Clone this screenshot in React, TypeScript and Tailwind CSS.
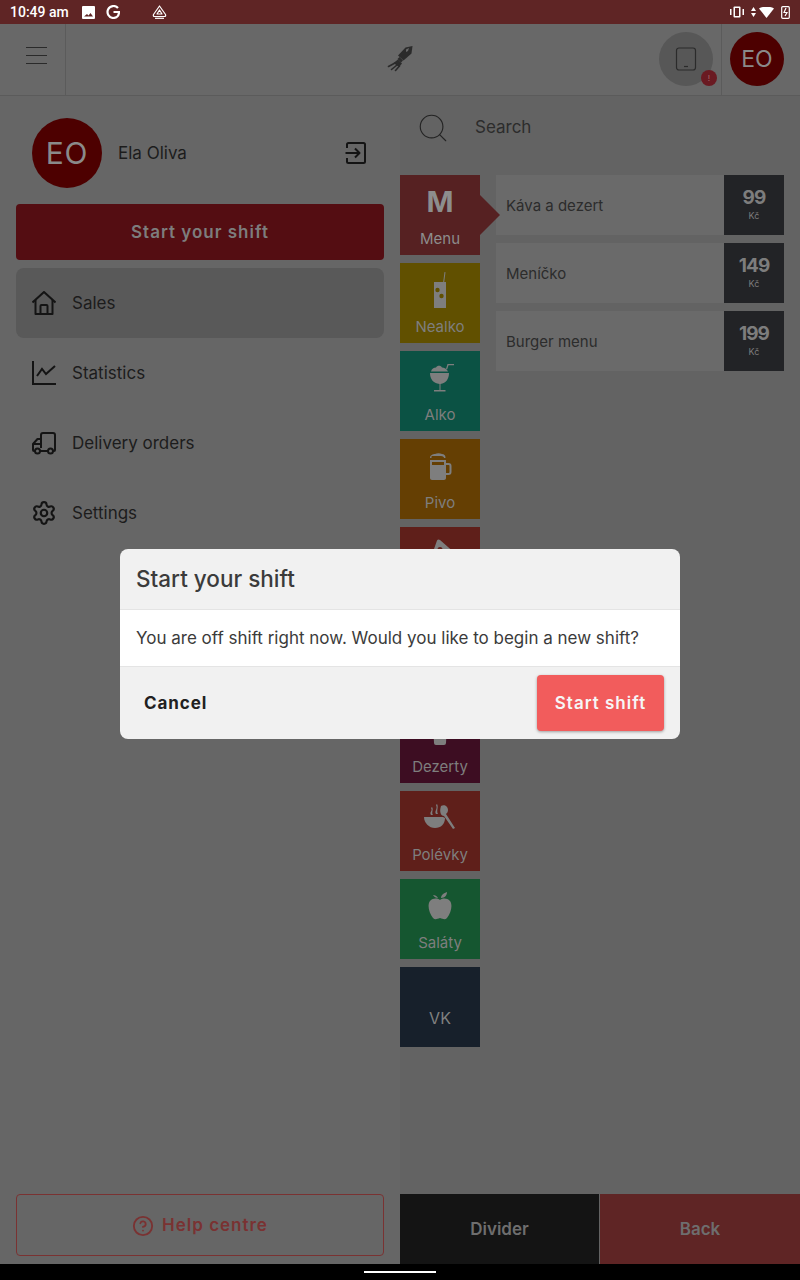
import React from 'react';
import { Settings, CircleHelp, Search } from 'lucide-react';

const font = { fontFamily: 'Inter, "Noto Sans", sans-serif' };

function HomeIcon() {
  return (
    <svg width="24" height="24" viewBox="0 0 24 24" fill="none" stroke="#141414" strokeWidth="2" strokeLinejoin="round">
      <path d="M0.500 11.500L12 1l11.500 10.500" />
      <path d="M3.500 9v14h17V9" />
      <path d="M8.500 23v-8a1 1 0 011-1h5a1 1 0 011 1v8" />
    </svg>
  );
}

function ChartIcon() {
  return (
    <svg width="24" height="24" viewBox="0 0 24 24" fill="none" stroke="#141414" strokeWidth="2">
      <path d="M1 0v23h23" />
      <path d="M5 15l5-7 4 5 9-8" />
    </svg>
  );
}

function TruckIcon() {
  return (
    <svg width="24" height="24" viewBox="0 0 24 24" fill="none" stroke="#141414" strokeWidth="2" strokeLinejoin="round">
      <path d="M9 17V4a2 2 0 012-2h10a2 2 0 012 2v15a1 1 0 01-1 1h-1" />
      <path d="M9 8H5.500L1 13v6a1 1 0 001 1h1" />
      <path d="M1 13h8" />
      <path d="M8 20h8" />
      <circle cx="5.500" cy="20" r="2.500" />
      <circle cx="18.500" cy="20" r="2.500" />
    </svg>
  );
}

function ExitIcon() {
  return (
    <svg width="24" height="24" viewBox="0 0 24 24" fill="none" stroke="#141414" strokeWidth="2" strokeLinejoin="round">
      <path d="M3 7V3.500A1.500 1.500 0 014.500 2h15A1.500 1.500 0 0121 3.500v17a1.500 1.500 0 01-1.500 1.500h-15A1.500 1.500 0 013 20.500V17" />
      <path d="M1.500 12H15" />
      <path d="M11 7.500l4.500 4.500-4.500 4.500" />
    </svg>
  );
}

function RocketIcon() {
  return (
    <svg width="50" height="50" viewBox="0 0 50 50" fill="#2b2b2b">
      <path d="M37.500 12l-1 7.500-8 7-5.500-5 7.500-8z" />
      <path d="M31 15.500l3-1.500-1 3-2 1z" fill="#686868" />
      <path d="M24.500 23l3.500 3.500-2 2-3.500-3.500z" />
      <path d="M23 25.500l4 4-3 3.500-5.500-4z" />
      <g stroke="#2b2b2b" strokeWidth="1.600" strokeLinecap="round">
        <path d="M20 29l-6.500 3.500" />
        <path d="M22 31l-5.500 4.500" />
        <path d="M24.500 32l-4 4.500" />
      </g>
    </svg>
  );
}

function DrinkIcon() {
  return (
    <svg width="14" height="36" viewBox="0 0 14 36" fill="currentColor">
      <path d="M11.500 0l1 .2L11.200 10H13v26H1V10h9.200z" />
      <circle cx="4.500" cy="18" r="2.200" fill="#615000" />
      <circle cx="8.500" cy="24" r="2.200" fill="#615000" />
    </svg>
  );
}

function CocktailIcon() {
  return (
    <svg width="28" height="30" viewBox="-3 0 28 30" fill="currentColor">
      <path d="M1 10h19c0 6-3 10-8.500 11v6h5v1.500H5V27h5.500v-6C4 20 1 16 1 10z" />
      <path d="M2 8.500c.5-2.500 3-4 5-4 1-2.500 5-2.500 6 0 2 0 5 1.500 6 4z" />
      <path d="M17 6l1.500-5H25v1.200h-5.500L18.200 6.300z" />
    </svg>
  );
}

function BeerIcon() {
  return (
    <svg width="23" height="27" viewBox="0 0 23 27" fill="currentColor">
      <path d="M1 5c0-3 3-4 5-4 2-1 5-1 7 0 2 0 3.500 1 3.500 4H15c0-1-1-2-3-2H3c-.7 0-.5 1-.5 2z" />
      <path fillRule="evenodd" d="M1 7h16v3h2.500c2 0 3 1 3 3v6c0 2-1 3-3 3H17v3c0 1-1 2-2 2H3c-1 0-2-1-2-2zm2 2v3h12V9zm14 3v8h2.500c.6 0 1-.4 1-1v-6c0-.6-.4-1-1-1z" />
    </svg>
  );
}

function SoupIcon() {
  return (
    <svg width="32" height="32" viewBox="0 0 32 32" fill="currentColor">
      <path d="M0 15h19l2 1c0 6-4 10-10 10S0 21 0 15z" />
      <path d="M17 4c3-2 7 0 7 4 0 2-1 3-2 4l9 14-2 1-9-13c-3 0-5-4-3-10z" />
      <path d="M7 13c-2-3 2-4 0-7l1-1c2 3-1 5 1 8zM12 12c-2-3 2-5 0-9l1-1c2 3-1 7 1 10z" />
    </svg>
  );
}

function AppleIcon() {
  return (
    <svg width="24" height="28" viewBox="0 0 24 28" fill="currentColor">
      <path d="M12 8c3-2 7-2 10 1 3 4 1 12-3 17-2 2-4 1-7 0-3 1-5 2-7 0C1 21-1 13 2 9c3-3 7-3 10-1z" />
      <path d="M13 6c0-3 3-5 6-6 0 3-2 6-6 6zM10 6C9 4 7 3 5 3c1 2 3 3 5 3z" />
    </svg>
  );
}

function PizzaIcon() {
  return (
    <svg width="34" height="30" viewBox="0 0 34 30" fill="currentColor">
      <path fillRule="evenodd" d="M4 30L14 1.500Q15 0 17 1L33 15l-4 3zM17 8a2.500 2.500 0 100 5 2.500 2.500 0 000-5z" />
    </svg>
  );
}

function CakeIcon() {
  return (
    <svg width="16" height="30" viewBox="0 0 16 30" fill="currentColor">
      <path d="M1 10h14l-1 18a2 2 0 01-2 2H4a2 2 0 01-2-2z" />
    </svg>
  );
}

const categories = [
  { name: 'Nealko', bg: 'bg-[#615000]', icon: <DrinkIcon /> },
  { name: 'Alko', bg: 'bg-[#0b5244]', icon: <CocktailIcon /> },
  { name: 'Pivo', bg: 'bg-[#653f03]', icon: <BeerIcon /> },
  { name: 'Pizza', bg: 'bg-[#5f1f1a]', icon: <PizzaIcon /> },
  { name: 'Burgery', bg: 'bg-[#5f1f1a]', icon: null },
  { name: 'Dezerty', bg: 'bg-[#3d0d22]', icon: <CakeIcon /> },
  { name: 'Polévky', bg: 'bg-[#5f1f1a]', icon: <SoupIcon /> },
  { name: 'Saláty', bg: 'bg-[#155630]', icon: <AppleIcon /> },
];

const items = [
  { name: 'Káva a dezert', price: '99' },
  { name: 'Meníčko', price: '149' },
  { name: 'Burger menu', price: '199' },
];

const nav = [
  { label: 'Sales', icon: <HomeIcon />, active: true },
  { label: 'Statistics', icon: <ChartIcon /> },
  { label: 'Delivery orders', icon: <TruckIcon /> },
  { label: 'Settings', icon: <Settings size={26} strokeWidth={2} className="-mx-px text-[#141414]" /> },
];

export default function App() {
  return (
    <div className="relative w-[800px] h-[1280px] overflow-hidden flex flex-col bg-[#666666] text-[#1c1c1c]" style={font}>
      {/* status bar */}
      <div className="h-6 shrink-0 flex items-center justify-between pl-2.5 pr-2.5 bg-[#5f2525] text-white text-sm font-medium" style={{ fontFamily: 'Roboto, sans-serif' }}>
        <div className="flex items-center">
          <span className="mr-[13px]">10:49 am</span>
          <svg className="mr-[11px]" width="13" height="13" viewBox="0 0 13 13" fill="white"><path fillRule="evenodd" d="M1 0h11a1 1 0 011 1v11a1 1 0 01-1 1H1a1 1 0 01-1-1V1a1 1 0 011-1zm1 10.500h9L8.500 7 6.500 9.500 5 8z" /></svg>
          <svg className="mr-8" width="14" height="14" viewBox="0 0 14 14" fill="none" stroke="white" strokeWidth="2.200"><path d="M12 3A6 6 0 107 13c3.500 0 6-2.200 6-6H7.500" /></svg>
          <svg width="15" height="14" viewBox="0 0 15 14" fill="none" stroke="white" strokeWidth="1.200" strokeLinejoin="round"><path d="M7.500 1l6 8.500c.5 1 0 2-1 2h-10c-1 0-1.500-1-1-2z" /><path d="M7.500 5l2.500 4H5z" /><path d="M3 13.300h9" /></svg>
        </div>
        <div className="flex items-center gap-[7px]">
          <svg width="14" height="12" viewBox="0 0 14 12" fill="white"><rect x="3.500" y="0.500" width="7" height="11" rx="1" /><rect x="5" y="2" width="4" height="8" fill="#5f2525" /><rect x="0" y="3" width="1.500" height="6" /><rect x="12.500" y="3" width="1.500" height="6" /></svg>
          <svg width="5" height="10" viewBox="0 0 5 10" fill="white"><path d="M2.500 0L5 4H0zM2.500 10L0 6h5z" /></svg>
          <svg className="-ml-1" width="15" height="11" viewBox="0 0 15 11" fill="white"><path d="M0 1.500C4-1 11-1 15 1.500L7.500 11z" /></svg>
          <svg width="9" height="14" viewBox="0 0 9 14" fill="none" stroke="white" strokeWidth="1.200"><rect x="0.700" y="1.700" width="7.600" height="11.600" rx="1" /><path d="M5 3L3 7.500h3L4 11" /></svg>
        </div>
      </div>

      {/* header */}
      <div className="h-[72px] shrink-0 flex border-b border-[#5b5b5b] bg-[#686868]">
        <div className="w-[66px] flex items-center justify-center border-r border-[#5b5b5b] pl-[7px] pb-2">
          <div className="w-[21px] flex flex-col gap-[7px]">
            <div className="h-px bg-[#2a2a2a]" />
            <div className="h-px bg-[#2a2a2a]" />
            <div className="h-px bg-[#2a2a2a]" />
          </div>
        </div>
        <div className="flex-1 flex items-center pl-[309px] pb-px">
          <RocketIcon />
        </div>
        <div className="relative w-[54px] h-[54px] mt-2 mr-2 rounded-full bg-[#575757] flex items-center justify-center">
          <svg width="24" height="24" viewBox="0 0 24 24" fill="none" stroke="#2b2b2b" strokeWidth="1.200"><rect x="2.500" y="1" width="19" height="22" rx="2.500" /><path d="M10 19.500h4" /></svg>
          <div className="absolute left-[42px] top-[38px] w-4 h-4 rounded-full bg-[#6a1a22] text-[#a86a6a] text-[8px] leading-4 text-center">!</div>
        </div>
        <div className="w-[79px] border-l border-[#5b5b5b] pl-2">
          <div className="mt-2 w-[54px] h-[54px] rounded-full bg-[#4d0000] text-[#8a8a8a] flex items-center justify-center text-[23px]">EO</div>
        </div>
      </div>

      <div className="flex-1 flex min-h-0">
        {/* left panel */}
        <div className="w-[400px] flex flex-col px-4 pb-2">
          <div className="flex items-center pt-[22px] pl-4">
            <div className="w-[70px] h-[70px] rounded-full bg-[#4d0000] text-[#8a8a8a] flex items-center justify-center text-[30px] tracking-wide">EO</div>
            <span className="ml-4 pt-0.5 text-[17px] flex-1">Ela Oliva</span>
            <div className="mr-[16px]"><ExitIcon /></div>
          </div>
          <div className="mt-4 h-14 pt-0.5 rounded bg-[#540d12] text-[#7d7d7d] font-semibold text-[17px] tracking-[1px] flex items-center justify-center">Start your shift</div>
          <div className="mt-2 flex flex-col">
            {nav.map(n => (
              <div key={n.label} className={`h-[70px] flex items-center pl-4 gap-4 rounded-lg ${n.active ? 'bg-[#595959]' : ''}`}>
                {n.icon}
                <span className="pt-0.5 text-[17px] text-[#1c1c1c]">{n.label}</span>
              </div>
            ))}
          </div>
          <div className="mt-auto h-[62px] pt-0.5 rounded border border-[#7a3232] text-[#7a3232] flex items-center justify-center gap-2 font-semibold text-[17px] tracking-[1px]">
            <CircleHelp size={22} strokeWidth={2} />
            Help centre
          </div>
        </div>

        {/* right panel */}
        <div className="w-[400px] flex flex-col bg-[#636363]">
          <div className="h-[79px] shrink-0 flex items-center pl-4 pb-4">
            <Search size={34} strokeWidth={0.8} className="text-[#232323]" />
            <span className="ml-[25px] text-[17px] text-[#2c2c2c]">Search</span>
          </div>
          <div className="flex-1 flex min-h-0">
            <div className="w-20 flex flex-col gap-2">
              <div className="relative h-20 bg-[#562122] text-[#8d8d8d] flex flex-col items-center">
                <span className="mt-[9px] text-[29px] leading-9 font-bold">M</span>
                <span className="mt-[9px] text-[15px] leading-5">Menu</span>
                <div className="absolute left-20 top-[20px] w-0 h-0 border-y-[20px] border-y-transparent border-l-[20px] border-l-[#562122]" />
              </div>
              {categories.map(c => (
                <div key={c.name} className={`h-20 ${c.bg} text-[#7e7e7e] flex flex-col items-center`}>
                  <div className="h-[54px] flex items-center justify-center">{c.icon}</div>
                  <span className="text-[15px] leading-5">{c.name}</span>
                </div>
              ))}
              <div className="h-20 bg-[#17202b] text-[#808080] flex items-center justify-center pt-[22px] text-[16px]">VK</div>
            </div>
            <div className="ml-4 w-[288px] flex flex-col gap-2">
              {items.map(i => (
                <div key={i.name} className="h-[60px] flex bg-[#6a6a6a]">
                  <span className="flex-1 self-center pl-2.5 pt-0.5 text-[15px] text-[#2c2c2c]">{i.name}</span>
                  <div className="w-[60px] bg-[#222326] text-[#7d7d7d] flex flex-col items-center justify-center pb-0.5">
                    <span className="text-[19px] leading-6 font-bold tracking-tighter">{i.price}</span>
                    <span className="text-[9px] leading-3">Kč</span>
                  </div>
                </div>
              ))}
            </div>
          </div>
          <div className="h-[70px] shrink-0 flex pt-0 text-[17px] font-semibold text-[#6e6e6e]">
            <div className="w-[199px] mr-px pt-0.5 bg-[#141414] flex items-center justify-center">Divider</div>
            <div className="flex-1 pt-0.5 bg-[#5f2525] flex items-center justify-center">Back</div>
          </div>
        </div>
      </div>

      {/* nav bar */}
      <div className="h-4 shrink-0 bg-black flex items-center justify-center">
        <div className="w-[72px] h-0.5 bg-white" />
      </div>

      {/* dialog */}
      <div className="absolute left-[120px] top-[549px] w-[560px] h-[190px] rounded-lg overflow-hidden bg-[#f1f1f1] flex flex-col">
        <div className="h-[61px] shrink-0 flex items-center px-4 text-[22.500px] font-medium text-[#3b3b3b] border-b border-[#e4e4e4]">Start your shift</div>
        <div className="h-[57px] shrink-0 pt-0.5 bg-white flex items-center px-4 text-[17px] text-[#3b3b3b] border-b border-[#e4e4e4]">You are off shift right now. Would you like to begin a new shift?</div>
        <div className="flex-1 flex items-center justify-between pl-6 pr-4">
          <span className="mt-0.5 font-bold text-[17px] tracking-[0.9px] text-[#212121]">Cancel</span>
          <div className="w-[127px] h-14 pt-0.5 rounded bg-[#f25c5c] text-[#f6f6f6] font-semibold text-[17px] tracking-[1px] flex items-center justify-center shadow-[0_1px_3px_rgba(0,0,0,0.35)]">Start shift</div>
        </div>
      </div>
    </div>
  );
}
